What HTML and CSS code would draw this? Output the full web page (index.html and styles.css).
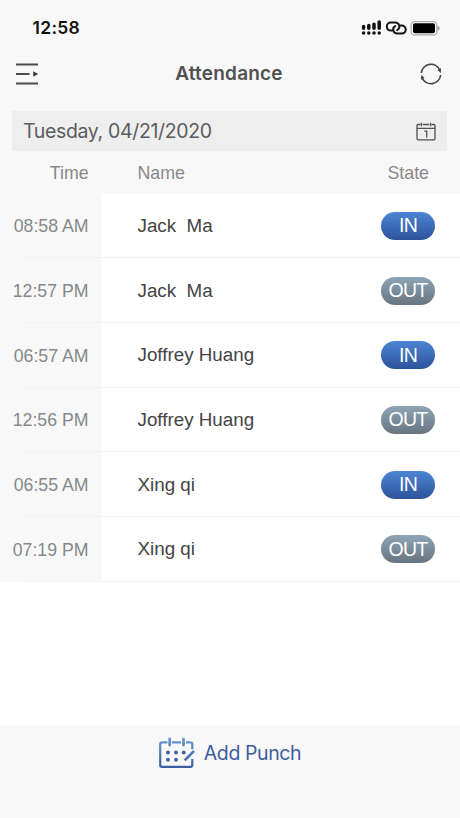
FILE: index.html
```html
<!DOCTYPE html>
<html lang="en">
<head>
<meta charset="utf-8">
<title>Attendance</title>
<link rel="stylesheet" href="styles.css">
</head>
<body>
<div class="app">
  <div class="status">
    <span class="clock">12:58</span>
    <svg class="status-icons" width="80" height="18" viewBox="0 0 80 18">
      <g stroke="#111" stroke-width="3.5" stroke-linecap="round">
        <path d="M3.600 7.500v1.700M8.800 6.500v2.700M14 5.300v3.900M19.200 3v6.200"/>
        <path d="M3.600 14h.01M8.800 14h.01M14 14h.01M19.200 14h.01"/>
      </g>
      <g fill="none" stroke="#151515" stroke-width="2" stroke-linecap="round">
        <path d="M32 11.600h-1.200a4 4 0 0 1 0-8h4.200c4.500 0 6 5.500 2.200 7.500"/>
        <path d="M40.500 6.600h1.200a4 4 0 0 1 0 8h-4.200c-4.500 0-6-5.500-2.200-7.500"/>
      </g>
      <rect x="51.200" y="2.700" width="25.600" height="13.200" rx="3.500" fill="#fff" stroke="#aaa" stroke-width="1.300"/>
      <rect x="53" y="4.300" width="22" height="10" rx="1.800" fill="#000"/>
      <path d="M78.200 7.200q2 2 0 4.200z" fill="#999" stroke="#999"/>
    </svg>
  </div>
  <header class="nav">
    <svg width="24" height="24" viewBox="0 0 24 24">
      <path d="M1 2.500h22M1 12h13.500M1 21.500h22" stroke="#4c4c4c" stroke-width="1.800" fill="none"/>
      <path d="M18.300 9.200L23 12l-4.700 2.800z" fill="#333"/>
    </svg>
    <h1>Attendance</h1>
    <svg width="24" height="24" viewBox="0 0 24 24">
      <path d="M2.300 11A9.700 9.700 0 0 1 21 8.500M21.700 13A9.700 9.700 0 0 1 3 15.500" fill="none" stroke="#444" stroke-width="1.600"/>
      <path d="M21.900 6v5l-3.300-2.800zM2.100 18v-5l3.300 2.800z" fill="#444"/>
    </svg>
  </header>
  <div class="date">
    <span>Tuesday, 04/21/2020</span>
    <svg width="20" height="19" viewBox="0 0 20 19" fill="none" stroke="#505050" stroke-width="1.300">
      <path d="M4.500 2.500H2q-1 0-1 1v13q0 1.300 1 1.300h16q1 0 1-1v-13.300q0-1-1-1h-2.500M7 2.500h6M1 6.300h18M5.500.700v3.500M14.500.700v3.500M8.300 9.200h2.400v6.400"/>
    </svg>
  </div>
  <div class="row head"><span class="time">Time</span><span class="name">Name</span><span class="state">State</span></div>
  <main>
    <div class="row"><span class="time">08:58 AM</span><span class="name">Jack&nbsp; Ma</span><span class="badge in">IN</span></div>
    <div class="row"><span class="time">12:57 PM</span><span class="name">Jack&nbsp; Ma</span><span class="badge out">OUT</span></div>
    <div class="row"><span class="time">06:57 AM</span><span class="name">Joffrey Huang</span><span class="badge in">IN</span></div>
    <div class="row"><span class="time">12:56 PM</span><span class="name">Joffrey Huang</span><span class="badge out">OUT</span></div>
    <div class="row"><span class="time">06:55 AM</span><span class="name">Xing qi</span><span class="badge in">IN</span></div>
    <div class="row"><span class="time">07:19 PM</span><span class="name">Xing qi</span><span class="badge out">OUT</span></div>
  </main>
  <footer>
    <svg width="36" height="32" viewBox="0 0 36 32">
      <defs><linearGradient id="ink" gradientUnits="userSpaceOnUse" x1="0" y1="0" x2="0" y2="32"><stop stop-color="#6d9bd8"/><stop offset="1" stop-color="#385a9e"/></linearGradient></defs>
      <g fill="none" stroke="url(#ink)" stroke-width="2.200">
        <path d="M8.500 5.300H3q-1.800 0-1.800 2V28q0 1.800 1.800 1.800h28.500q1.800 0 1.800-1.800v-6M13 5.300h9M27 5.300h4.500q1.800 0 1.800 2v5"/>
        <path d="M10.700 2v6M24.500 2v6" stroke-width="2.800" stroke-linecap="round"/>
        <path d="M35 14l-7.500 7.500-1.700 1.800" stroke-width="2.600"/>
      </g>
      <g fill="#4262a5"><circle cx="9" cy="15.500" r="2"/><circle cx="17" cy="15.500" r="2"/><circle cx="24.700" cy="15.500" r="2"/><circle cx="9" cy="22.700" r="2"/><circle cx="17" cy="22.700" r="2"/></g>
    </svg>
    <span>Add Punch</span>
  </footer>
</div>
</body>
</html>
```

FILE: styles.css
```css
* { box-sizing: border-box; }
body { margin: 0; background: #fff; }
.app {
  width: 460px;
  height: 818px;
  display: flex;
  flex-direction: column;
  font-family: "Liberation Sans", Arial, sans-serif;
  color: #444;
  overflow: hidden;
  white-space: nowrap;
  background: #f8f8f8;
}
svg { display: block; flex: none; }
.status {
  height: 50px;
  padding: 5px 20px 0 32.5px;
  display: flex;
  align-items: center;
  justify-content: space-between;
}
.clock { font: 600 17.5px Inter, sans-serif; letter-spacing: 0.3px; color: #111; }
.nav {
  height: 48px;
  padding: 0 17px 0 15px;
  display: flex;
  align-items: center;
  justify-content: space-between;
}
h1 { margin: 0; padding-bottom: 1px; font: 600 19px Inter, sans-serif; letter-spacing: 0.2px; color: #505052; }
.date {
  height: 40px;
  margin: 13px 13px 0 12px;
  padding: 0 11px;
  display: flex;
  align-items: center;
  justify-content: space-between;
  background: #eee;
  font: 400 19.5px Inter, sans-serif;
  letter-spacing: -0.35px;
  color: #5c5c5e;
}
.row {
  height: 64.7px;
  display: flex;
  align-items: stretch;
  position: relative;
}
.row > span { display: flex; align-items: center; }
.row > .time {
  width: 102px;
  padding: 2px 13.5px 0 0;
  justify-content: flex-end;
  background: #f8f8f8;
  font-size: 17.7px;
  color: #85898b;
}
.name { flex: 1; padding-left: 35.5px; font-size: 18.8px; color: #444; }
.head { height: 42.5px; }
.row.head > span { padding-top: 2px; }
.head .name, .state { font-size: 17.8px; color: #8a8a8c; }
.state { padding-right: 31px; }
main { height: 532.5px; background: #fff; }
main .row::after {
  content: "";
  position: absolute;
  left: 24px;
  right: 0;
  bottom: 0;
  height: 1px;
  background: #f2f2f2;
}
.row > .badge {
  align-self: center;
  justify-content: center;
  width: 54px;
  height: 28px;
  margin-right: 25px;
  border-radius: 14px;
  color: #fff;
  font-size: 19.5px;
  letter-spacing: -0.8px;
}
.in { background: linear-gradient(#4c85d4, #2e539a); }
.out { background: linear-gradient(#8ea4b5, #687580); }
footer {
  flex: 1;
  display: flex;
  justify-content: center;
  align-items: flex-start;
  gap: 9px;
  padding-top: 10px;
  border-top: 1px solid #f2f2f2;
  font: 400 19.5px Inter, sans-serif;
  letter-spacing: -0.4px;
  color: #3f5d9e;
}
footer span { line-height: 32px; }
```
